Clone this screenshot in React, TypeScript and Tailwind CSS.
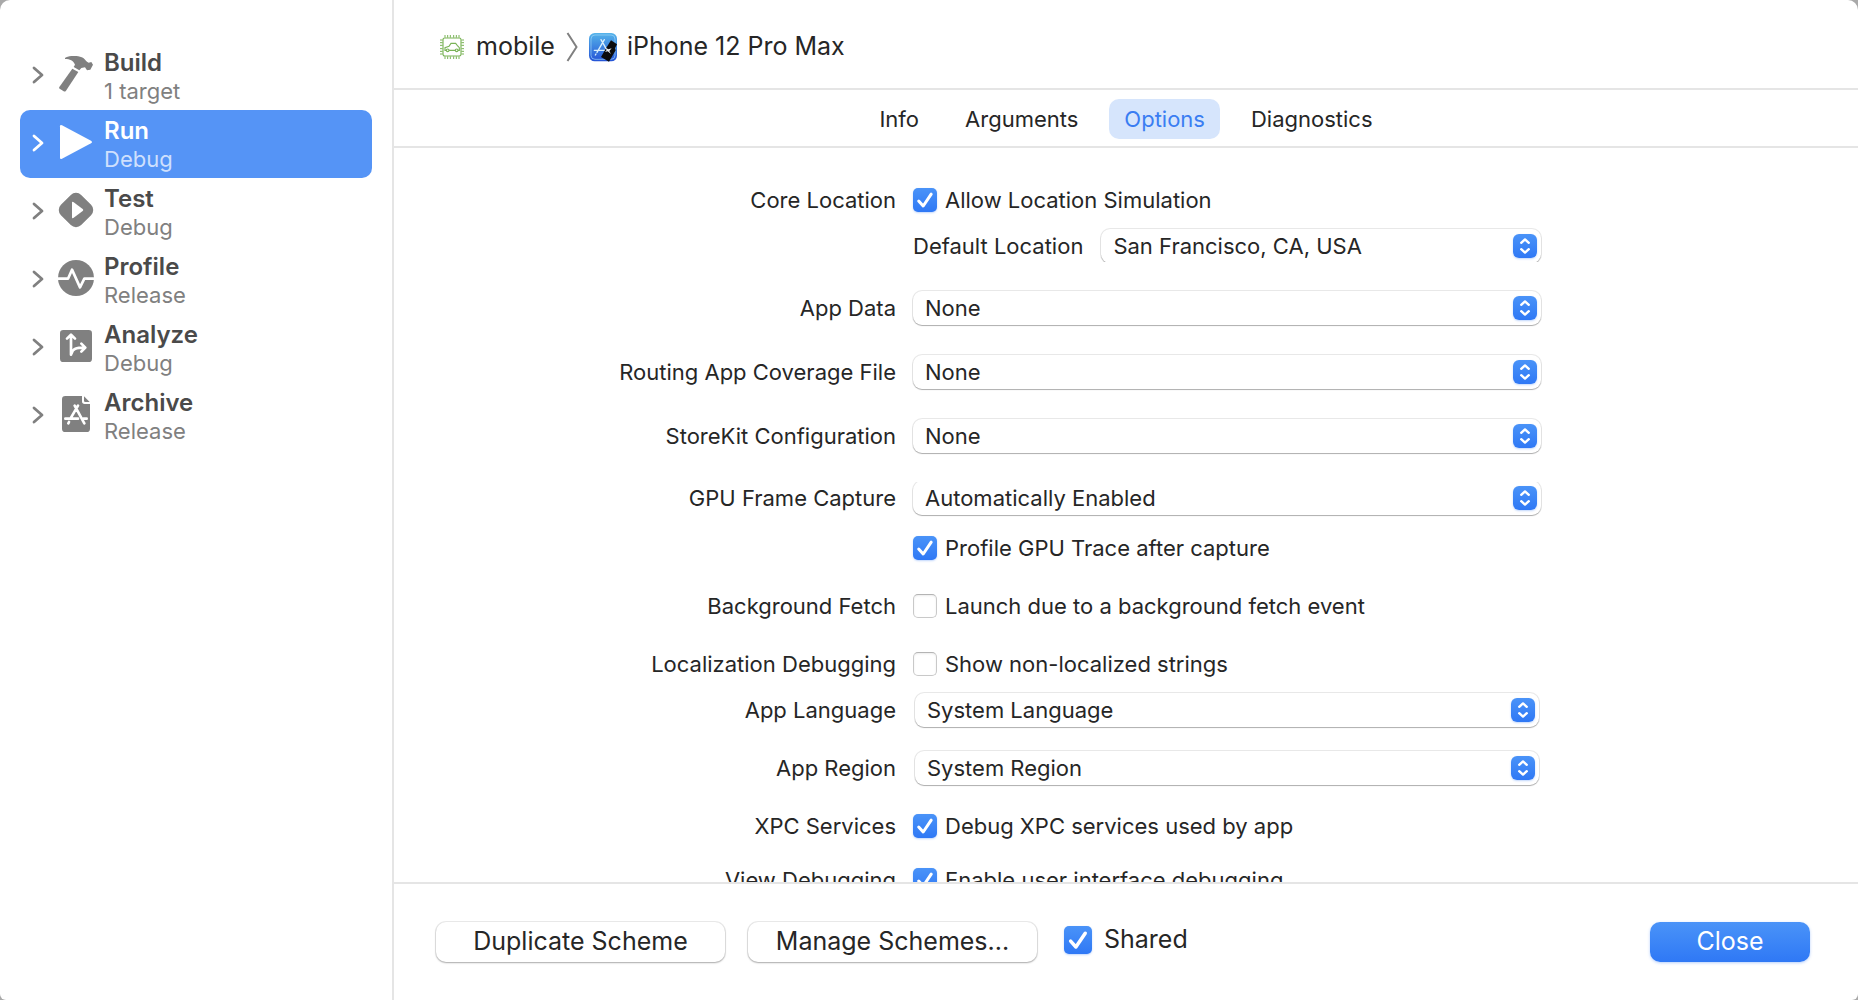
import type { ReactNode } from "react";

/* ---------- icons ---------- */

function ChevronIcon() {
  return (
    <svg viewBox="0 0 12 18" className="mt-0.5 h-[18px] w-3 shrink-0" fill="none" stroke="currentColor" strokeWidth="2.8" strokeLinecap="round" strokeLinejoin="round" aria-hidden="true">
      <path d="M2 2 10 9 2 16" />
    </svg>
  );
}

function SchemeIcon({ children }: { children: ReactNode }) {
  return (
    <svg viewBox="0 0 108 108" className="size-9 shrink-0" fill="currentColor" aria-hidden="true">
      {children}
    </svg>
  );
}

const buildIcon = (
  <SchemeIcon>
    <path d="M43 38 61 48 24 104Q21 108 17 106L5 98Q2 96 4 93Z" />
    <path d="M21 6C32-2 60-3 76 6C82 10 84 18 92 20L100 18 105 26 97 41 87 43 81 34 70 36 64 43 47 33 51 26C46 14 36 9 21 9Z" />
  </SchemeIcon>
);

const runIcon = (
  <SchemeIcon>
    <path d="M6 7Q6 1 12 4L99 50Q105 54 99 58L12 104Q6 107 6 101Z" />
  </SchemeIcon>
);

const testIcon = (
  <SchemeIcon>
    <rect x="11" y="11" width="86" height="86" rx="22" transform="rotate(45 54 54)" />
    <path d="M42 32Q42 28 46 30L74 51Q78 54 74 57L46 78Q42 80 42 76Z" fill="#fff" />
  </SchemeIcon>
);

const profileIcon = (
  <SchemeIcon>
    <circle cx="54" cy="54" r="54" />
    <path d="M0 56H30L42 29 66 82 79 56H108" fill="none" stroke="#fff" strokeWidth="8" strokeLinejoin="round" />
  </SchemeIcon>
);

const analyzeIcon = (
  <SchemeIcon>
    <rect x="6" y="6" width="96" height="96" rx="10" />
    <g fill="none" stroke="#fff" strokeWidth="8" strokeLinecap="round" strokeLinejoin="round">
      <path d="M39 80V22M27 32 39 20 51 32" />
      <path d="M41 76C44 62 54 59 80 59M70 47 82 59 70 71" />
    </g>
  </SchemeIcon>
);

const archiveIcon = (
  <SchemeIcon>
    <path d="M22 0H72V16Q72 24 80 24H96V98Q96 108 86 108H22Q12 108 12 98V10Q12 0 22 0Z" />
    <path d="M78 1 95 18H82Q78 18 78 14Z" />
    <g fill="none" stroke="#fff" strokeWidth="8" strokeLinecap="round">
      <path d="M50 29 79 82M60 29 39 65M22 68H60M76 68H86M33 78 31 82" />
    </g>
  </SchemeIcon>
);

function ChipCarIcon() {
  const ticks = [15, 23, 31, 41, 49, 57];
  return (
    <svg viewBox="0 0 72 72" className="size-6 shrink-0" fill="none" stroke="#7ab357" strokeWidth="3.4" aria-hidden="true">
      <rect x="9" y="9" width="54" height="54" rx="5" />
      {ticks.map((t) => (
        <path key={t} strokeWidth="3" d={`M${t} 0V8M${t} 64V72M0 ${t}H8M64 ${t}H72`} />
      ))}
      <path d="M19 46H15V38L27 34 33 25H47L53 33 58 38V46H54M27 46H46" />
      <circle cx="23" cy="46" r="4" />
      <circle cx="50" cy="46" r="4" />
    </svg>
  );
}

function SimulatorIcon() {
  return (
    <svg viewBox="0 0 84 87" className="h-[29px] w-7 shrink-0" aria-hidden="true">
      <defs>
        <linearGradient id="simulator-blue" x1="0" y1="0" x2="0" y2="1">
          <stop offset="0" stopColor="#55b4ea" />
          <stop offset="1" stopColor="#2453d6" />
        </linearGradient>
      </defs>
      <rect width="84" height="85" rx="17" fill="url(#simulator-blue)" />
      <rect x="6" y="6" width="72" height="73" rx="12" fill="none" stroke="#9fd4f7" strokeWidth="2" />
      <g fill="none" stroke="#d9effc" strokeWidth="4" strokeLinecap="round">
        <path d="M36 20 60 62M46 20 24 58M16 52H62M21 63 19 66" />
      </g>
      <path d="M66 22 84 34 78 46 80 52 60 86 36 72 52 44Z" fill="#0b0b0d" />
      <path d="M46 42 58 49 68 46 61 54 66 63 56 55 48 57 53 51Z" fill="#e9edf2" />
    </svg>
  );
}

/* ---------- controls ---------- */

function Checkbox({ label, checked, large }: { label: string; checked?: boolean; large?: boolean }) {
  return (
    <label className={large ? "flex items-center gap-3 pb-1 text-[25px]" : "flex items-center gap-2"}>
      <span className={large ? "relative size-7 shrink-0" : "relative size-6 shrink-0"}>
        <input
          type="checkbox"
          defaultChecked={checked}
          className="peer block size-full appearance-none rounded-[5px] border border-[#c9c9c9] border-t-[#b4b4b4] bg-white shadow-[inset_0_1px_2px_rgba(0,0,0,0.08)] checked:border-0 checked:bg-linear-to-b checked:from-[#4a93f8] checked:to-[#2f78f5] checked:shadow-[0_1px_2px_rgba(47,120,245,0.3)]"
        />
        <svg viewBox="0 0 24 24" className="pointer-events-none absolute inset-0 hidden size-full peer-checked:block" fill="none" stroke="#fff" strokeWidth="3" strokeLinecap="round" strokeLinejoin="round" aria-hidden="true">
          <path d="M5.7 13 10.2 18 18.2 6.2" />
        </svg>
      </span>
      <span className="whitespace-nowrap">{label}</span>
    </label>
  );
}

function PopUp({ id, value, className = "" }: { id: string; value: string; className?: string }) {
  return (
    <div className={`relative h-[34px] ${className}`}>
      <select
        id={id}
        className="block h-full w-full appearance-none rounded-[9px] bg-white pr-10 pl-3 text-[22px] leading-[34px] shadow-[0_0_0_1px_rgba(0,0,0,0.09),0_1px_1px_rgba(0,0,0,0.25)]"
      >
        <option>{value}</option>
      </select>
      <span className="pointer-events-none absolute top-[5px] right-1 size-6 rounded-[6px] bg-linear-to-b from-[#4a93f8] to-[#2f78f5] shadow-[0_1px_2px_rgba(47,120,245,0.3)]">
        <svg viewBox="0 0 24 24" className="size-6" fill="none" stroke="#fff" strokeWidth="2.4" strokeLinecap="round" strokeLinejoin="round" aria-hidden="true">
          <path d="M8.2 8.8 12 5.4 15.8 8.8M8.2 15.2 12 18.6 15.8 15.2" />
        </svg>
      </span>
    </div>
  );
}

function Row({ label, htmlFor, gap = "", children }: { label?: string; htmlFor?: string; gap?: string; children: ReactNode }) {
  return (
    <div className={`grid grid-cols-[502fr_628fr_300fr] items-center gap-x-[17px] ${gap}`}>
      <div className="text-right leading-[34px] whitespace-nowrap">
        {label && (htmlFor ? <label htmlFor={htmlFor}>{label}</label> : label)}
      </div>
      <div className="flex h-[34px] min-w-0 flex-col justify-center">{children}</div>
    </div>
  );
}

/* ---------- data ---------- */

const actions = [
  { title: "Build", detail: "1 target", icon: buildIcon },
  { title: "Run", detail: "Debug", icon: runIcon, selected: true },
  { title: "Test", detail: "Debug", icon: testIcon },
  { title: "Profile", detail: "Release", icon: profileIcon },
  { title: "Analyze", detail: "Debug", icon: analyzeIcon },
  { title: "Archive", detail: "Release", icon: archiveIcon },
];

const tabs = ["Info", "Arguments", "Options", "Diagnostics"];

const pushButton =
  "h-10 w-[289px] rounded-[10px] bg-white pb-0.5 text-[25px] leading-[38px] shadow-[0_0_0_1px_rgba(0,0,0,0.08),0_1px_2px_rgba(0,0,0,0.28)]";

/* ---------- page ---------- */

export default function App() {
  return (
    <div className="h-screen bg-[#a9a9a9] font-['Inter',sans-serif] text-[22px] text-[#262626]">
      <div className="flex h-full overflow-hidden rounded-t-[10px] rounded-b-[6px] bg-white">
        <nav aria-label="Scheme actions" className="w-[394px] shrink-0 border-r-2 border-[#e5e5e5] px-5 pt-[42px]">
          {actions.map((a) => (
            <button
              key={a.title}
              type="button"
              aria-current={a.selected ? "true" : undefined}
              className={
                a.selected
                  ? "flex h-[68px] w-full items-center rounded-[10px] bg-[#5594f6] pb-1 pl-3 text-left text-white"
                  : "flex h-[68px] w-full items-center pb-1 pl-3 text-left text-[#808080]"
              }
            >
              <ChevronIcon />
              <span className="ml-[14px] flex">{a.icon}</span>
              <span className="mt-1.5 ml-[10px] flex flex-col leading-7">
                <span className={a.selected ? "text-[24px] leading-7 font-semibold" : "text-[24px] leading-7 font-semibold text-[#4a4a4a]"}>{a.title}</span>
                <span className={a.selected ? "text-[#cfe0fd]" : ""}>{a.detail}</span>
              </span>
            </button>
          ))}
        </nav>

        <main className="flex min-w-0 flex-1 flex-col">
          <header className="flex h-[90px] shrink-0 items-center border-b-2 border-[#e5e5e5] pt-1.5 pl-[46px] text-[25px]">
            <ChipCarIcon />
            <span className="ml-3">mobile</span>
            <svg viewBox="0 0 12 30" className="mx-[11px] h-[30px] w-3 shrink-0" fill="none" stroke="#808080" strokeWidth="2" aria-hidden="true">
              <path d="M1.5 1 10.5 15 1.5 29" />
            </svg>
            <SimulatorIcon />
            <span className="ml-[10px]">iPhone 12 Pro Max</span>
          </header>

          <div role="tablist" className="flex h-[58px] shrink-0 items-center justify-center gap-4 border-b-2 border-[#e5e5e5] pt-0.5">
            {tabs.map((t) => (
              <button
                key={t}
                type="button"
                role="tab"
                aria-selected={t === "Options"}
                className={
                  t === "Options"
                    ? "h-10 rounded-[10px] bg-[#d6e5fc] px-[15px] text-[#3a7df2]"
                    : "h-10 px-[15px]"
                }
              >
                {t}
              </button>
            ))}
          </div>

          <form className="min-h-0 flex-1 overflow-y-auto pt-[35px] [scrollbar-width:none]">
            <Row label="Core Location">
              <Checkbox label="Allow Location Simulation" checked />
            </Row>
            <Row gap="mt-3">
              <div className="flex items-center">
                <label htmlFor="default-location" className="mr-[18px] shrink-0 whitespace-nowrap">Default Location</label>
                <PopUp id="default-location" value="San Francisco, CA, USA" className="min-w-0 flex-1 [clip-path:inset(-2px_-2px_1px_-2px)]" />
              </div>
            </Row>
            <Row label="App Data" htmlFor="app-data" gap="mt-7">
              <PopUp id="app-data" value="None" />
            </Row>
            <Row label="Routing App Coverage File" htmlFor="routing" gap="mt-[30px]">
              <PopUp id="routing" value="None" />
            </Row>
            <Row label="StoreKit Configuration" htmlFor="storekit" gap="mt-[30px]">
              <PopUp id="storekit" value="None" />
            </Row>
            <Row label="GPU Frame Capture" htmlFor="gpu-capture" gap="mt-7">
              <PopUp id="gpu-capture" value="Automatically Enabled" className="[clip-path:inset(1px_-2px_-3px_-2px)]" />
            </Row>
            <Row gap="mt-4">
              <Checkbox label="Profile GPU Trace after capture" checked />
            </Row>
            <Row label="Background Fetch" gap="mt-6">
              <Checkbox label="Launch due to a background fetch event" />
            </Row>
            <Row label="Localization Debugging" gap="mt-6">
              <Checkbox label="Show non-localized strings" />
            </Row>
            <Row label="App Language" htmlFor="app-language" gap="mt-3">
              <PopUp id="app-language" value="System Language" className="mx-0.5" />
            </Row>
            <Row label="App Region" htmlFor="app-region" gap="mt-6">
              <PopUp id="app-region" value="System Region" className="mx-0.5" />
            </Row>
            <Row label="XPC Services" gap="mt-6">
              <Checkbox label="Debug XPC services used by app" checked />
            </Row>
            <Row label="View Debugging" gap="mt-5">
              <Checkbox label="Enable user interface debugging" checked />
            </Row>
          </form>

          <footer className="flex h-[118px] shrink-0 items-center border-t-2 border-[#e5e5e5] pr-12 pl-[42px]">
            <button type="button" className={pushButton}>Duplicate Scheme</button>
            <button type="button" className={`mr-[27px] ml-[23px] ${pushButton}`}>Manage Schemes...</button>
            <Checkbox label="Shared" checked large />
            <button type="button" className="ml-auto h-10 w-40 rounded-[10px] bg-linear-to-b from-[#4a93f8] to-[#2f78f5] pb-0.5 text-[25px] leading-[38px] text-white shadow-[0_1px_3px_rgba(47,120,245,0.35)]">
              Close
            </button>
          </footer>
        </main>
      </div>
    </div>
  );
}
